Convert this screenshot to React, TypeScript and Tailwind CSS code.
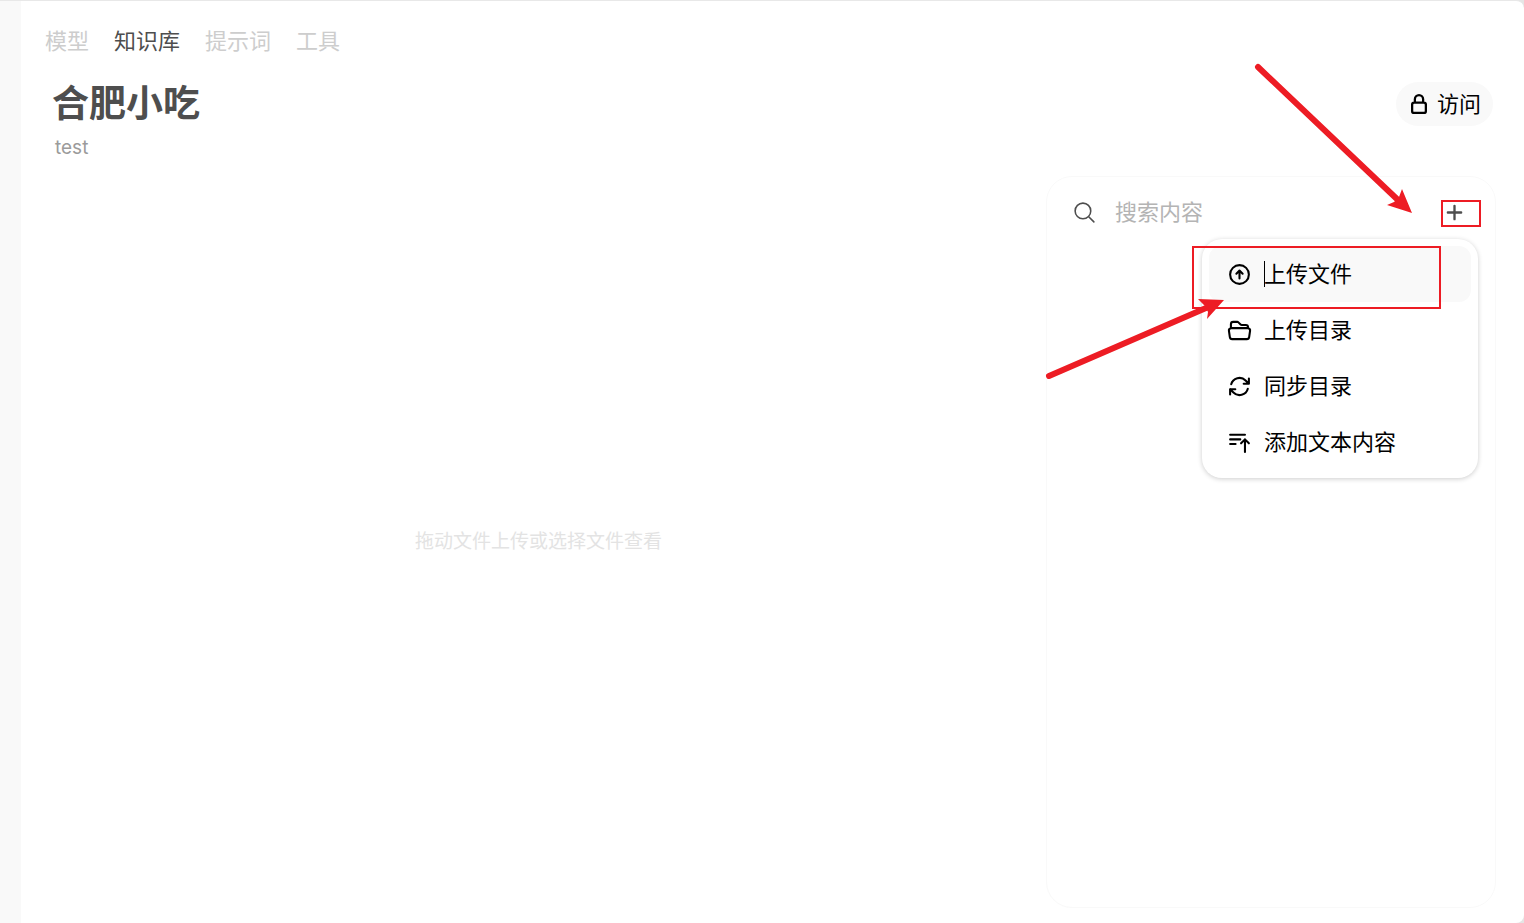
import { clsx } from "clsx";
import type { ReactNode } from "react";

const tabs = [
  { label: "模型", active: false },
  { label: "知识库", active: true },
  { label: "提示词", active: false },
  { label: "工具", active: false },
];

const Icon = ({
  d,
  className,
  strokeWidth = 2,
}: {
  d: string;
  className?: string;
  strokeWidth?: number;
}) => (
  <svg
    viewBox="0 0 24 24"
    fill="none"
    stroke="currentColor"
    strokeWidth={strokeWidth}
    strokeLinecap="round"
    strokeLinejoin="round"
    aria-hidden="true"
    className={clsx("shrink-0", className)}
  >
    <path d={d} />
  </svg>
);

const icons = {
  lock: "M16.5 10.5V6.75a4.5 4.5 0 1 0-9 0v3.75m-.75 11.25h10.5a2.25 2.25 0 0 0 2.25-2.25v-6.75a2.25 2.25 0 0 0-2.25-2.25H6.75a2.25 2.25 0 0 0-2.25 2.25v6.75a2.25 2.25 0 0 0 2.25 2.25Z",
  search:
    "m21 21-5.197-5.197m0 0A7.5 7.5 0 1 0 5.196 5.196a7.5 7.5 0 0 0 10.607 10.607Z",
  upload:
    "m15 11.25-3-3m0 0-3 3m3-3v7.5M21 12a9 9 0 1 1-18 0 9 9 0 0 1 18 0Z",
  folder:
    "M3.75 9.776c.112-.017.227-.026.344-.026h15.812c.117 0 .232.009.344.026m-16.5 0a2.25 2.25 0 0 0-1.883 2.542l.857 6a2.25 2.25 0 0 0 2.227 1.932H19.05a2.25 2.25 0 0 0 2.227-1.932l.857-6a2.25 2.25 0 0 0-1.883-2.542m-16.5 0V6A2.25 2.25 0 0 1 6 3.75h3.879a1.5 1.5 0 0 1 1.06.44l2.122 2.12a1.5 1.5 0 0 0 1.06.44H18A2.25 2.25 0 0 1 20.25 9v.776",
  sync: "M16.023 9.348h4.992v-.001M2.985 19.644v-4.992m0 0h4.992m-4.993 0 3.181 3.183a8.25 8.25 0 0 0 13.803-3.7M4.031 9.865a8.25 8.25 0 0 1 13.803-3.7l3.181 3.182m0-4.991v4.99",
  text: "M3 4.5h14.25M3 9h9.75M3 13.5h5.25m5.25-.75L17.25 9m0 0L21 12.75M17.25 9v12",
};

const MenuItem = ({
  icon,
  active,
  children,
}: {
  icon: string;
  active?: boolean;
  children: ReactNode;
}) => (
  <button
    type="button"
    role="menuitem"
    className={clsx(
      "flex h-14 w-full items-center gap-3 rounded-xl pl-[18px] text-left",
      active && "bg-[#f9f9f9]"
    )}
  >
    <Icon d={icon} className="size-[25px]" />
    <span className="relative">
      {active && <span className="absolute inset-y-0 left-0 w-px bg-black" />}
      {children}
    </span>
  </button>
);

const AddMenu = () => (
  <div
    role="menu"
    className="absolute top-[62px] right-[17px] z-10 w-[276px] rounded-[20px] bg-white px-[7px] pt-[7px] pb-2 text-[22px] leading-[26px] text-black shadow-[0_1px_5px_rgba(0,0,0,0.2)]"
  >
    <MenuItem icon={icons.upload} active>
      上传文件
    </MenuItem>
    <MenuItem icon={icons.folder}>上传目录</MenuItem>
    <MenuItem icon={icons.sync}>同步目录</MenuItem>
    <MenuItem icon={icons.text}>添加文本内容</MenuItem>
  </div>
);

// Red boxes and arrows drawn over the top right part of the page
const Markup = () => (
  <svg
    viewBox="0 1 500 400"
    width="500"
    height="400"
    aria-hidden="true"
    className="pointer-events-none absolute top-0 right-0 z-20"
  >
    <g fill="none" stroke="#ed1c24" strokeWidth="2">
      <rect x="418" y="201" width="38" height="25" />
      <rect x="169" y="247" width="247" height="61" />
    </g>
    <g stroke="#ed1c24" strokeWidth="6" strokeLinecap="round">
      <path d="M234 67 374 200" />
      <path d="M25 376 182 308" />
    </g>
    <g fill="#ed1c24">
      <path d="M388 213 378 189 375 197 370 202 363 205Z" />
      <path d="M200 300 174 299 181 306 184 312 183 319Z" />
    </g>
  </svg>
);

export default function App() {
  return (
    <div className="bg-[#e5e5e5]">
      <div className="relative flex min-h-screen overflow-hidden rounded-r-lg border-t border-[#e8e8e8] bg-white font-['Inter','Noto_Sans_CJK_SC',sans-serif] text-[#4e4e4e]">
        <aside className="w-[21px] shrink-0 bg-[#f9f9f9]" />

        <main className="flex min-w-0 flex-1 flex-col pr-7 pb-[15px] pl-6">
          <nav className="flex gap-[25px] pt-6 text-[22px] leading-8">
            {tabs.map((tab) => (
              <a
                key={tab.label}
                href="#"
                className={tab.active ? "text-[#4e4e4e]" : "text-[#cdcdcd]"}
              >
                {tab.label}
              </a>
            ))}
          </nav>

          <header className="flex items-start justify-between pt-[25px] pr-[3px] pl-[7px]">
            <div>
              <h1 className="text-[37px] leading-[44px] font-bold">合肥小吃</h1>
              <p className="pt-2 pl-[3px] text-[19px] leading-7 text-[#9b9b9b]">
                test
              </p>
            </div>
            <button
              type="button"
              className="flex h-11 items-center gap-[7px] rounded-full bg-[#f9f9f9] px-3 text-[22px] text-black"
            >
              <Icon d={icons.lock} strokeWidth={2.5} className="size-[22px]" />
              访问
            </button>
          </header>

          <div className="mt-3.5 flex flex-1">
            <div className="flex flex-1 items-center justify-center pr-3.5 text-[19px] text-[#e3e3e3]">
              拖动文件上传或选择文件查看
            </div>

            <section className="relative w-[450px] rounded-[26px] border border-[#f9f9f9]">
              <div className="flex h-[70px] items-center pr-7 pl-[25px]">
                <Icon
                  d={icons.search}
                  strokeWidth={1.5}
                  className="size-[25px]"
                />
                <input
                  type="text"
                  aria-label="搜索内容"
                  placeholder="搜索内容"
                  className="ml-[18px] min-w-0 flex-1 bg-transparent text-[22px] outline-none placeholder:text-[#b4b4b4]"
                />
                <button type="button" aria-label="添加内容">
                  <svg
                    viewBox="0 0 16 16"
                    fill="currentColor"
                    className="size-[25px]"
                  >
                    <path d="M8.75 3.75a.75.75 0 0 0-1.5 0v3.5h-3.5a.75.75 0 0 0 0 1.5h3.5v3.5a.75.75 0 0 0 1.5 0v-3.5h3.5a.75.75 0 0 0 0-1.5h-3.5v-3.5Z" />
                  </svg>
                </button>
              </div>
              <AddMenu />
            </section>
          </div>
        </main>

        <Markup />
      </div>
    </div>
  );
}
